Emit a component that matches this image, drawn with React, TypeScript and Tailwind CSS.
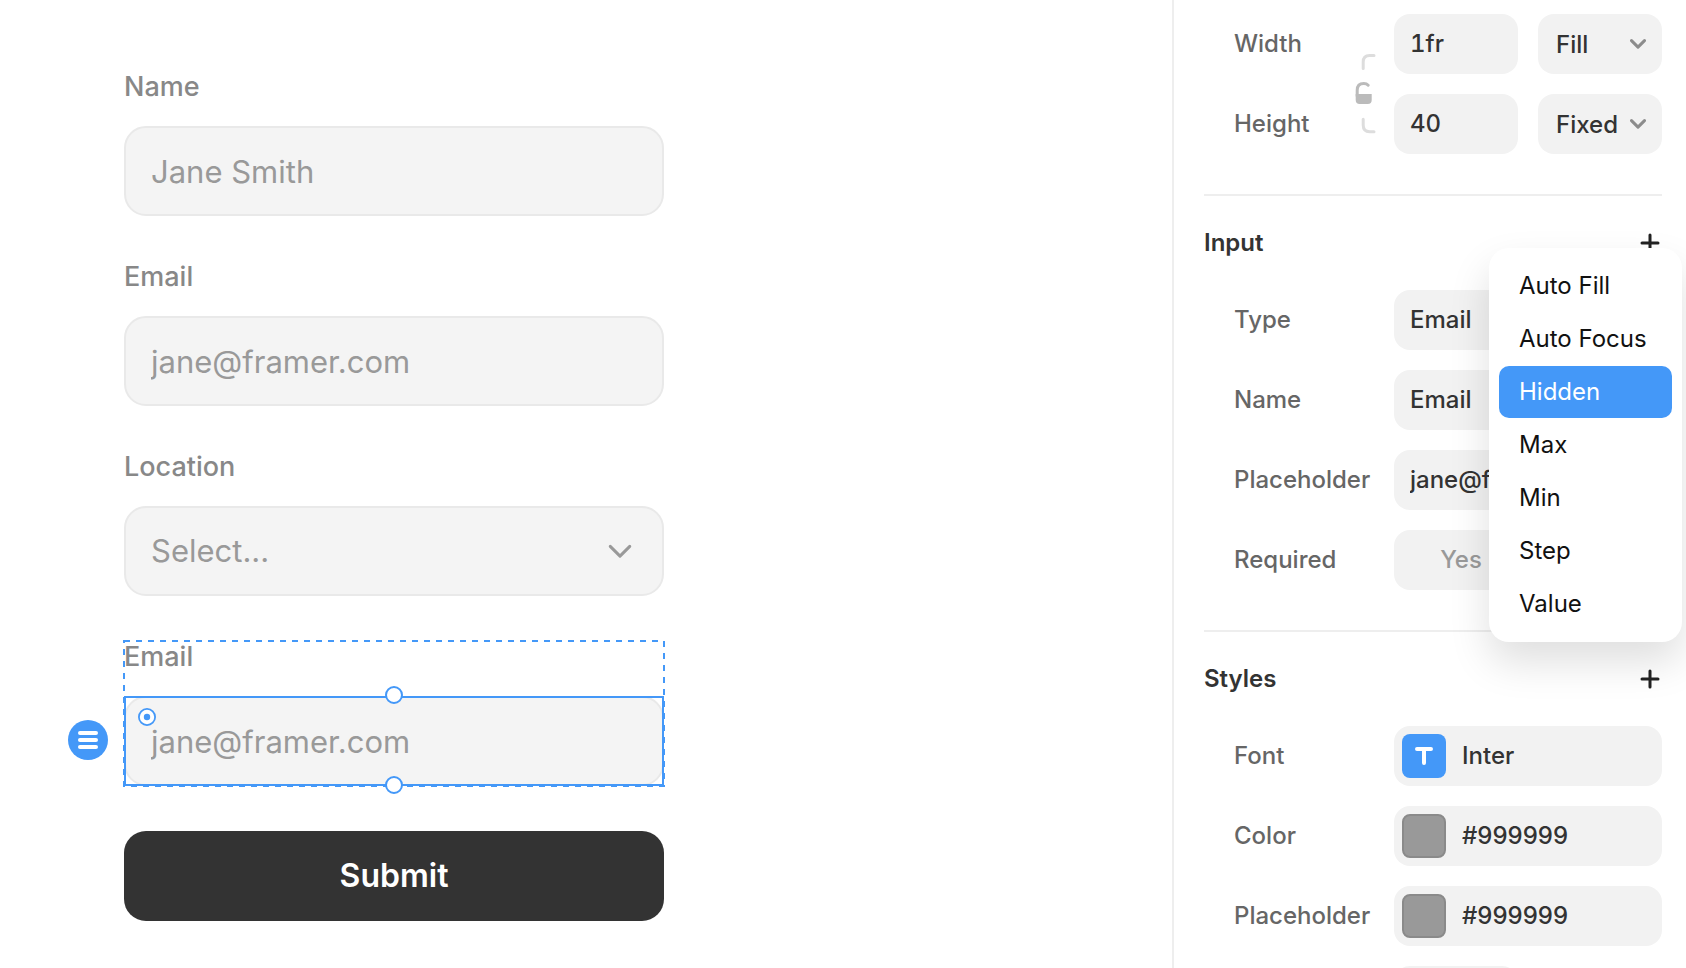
import { useId, type ReactNode } from 'react';

const menuItems = ['Auto Fill', 'Auto Focus', 'Hidden', 'Max', 'Min', 'Step', 'Value'];

function Chevron({ className }: { className: string }) {
  return (
    <svg viewBox="0 0 16 10" fill="none" stroke="currentColor" className={className} aria-hidden="true">
      <path d="M1.5 1.6 8 8.1l6.5-6.5" strokeLinecap="round" strokeLinejoin="round" />
    </svg>
  );
}

function Plus({ label }: { label: string }) {
  return (
    <button type="button" aria-label={label} className="size-6 text-[#222]">
      <svg viewBox="0 0 24 24" fill="none" stroke="currentColor" strokeWidth="3" strokeLinecap="round" className="size-6">
        <path d="M12 4v16M4 12h16" />
      </svg>
    </button>
  );
}

/* ---------- Canvas form ---------- */

const boxClass =
  'block h-[90px] w-full appearance-none rounded-[22px] border-2 border-[#e9e9e9] bg-[#f4f4f4] px-[25px] text-[31px] text-[#999] placeholder:text-[#999] outline-none';

function FormField({ label, children }: { label: string; children: (id: string) => ReactNode }) {
  const id = useId();
  return (
    <div className="relative flex flex-col gap-6">
      <label htmlFor={id} className="text-[27px] leading-[31px] font-medium text-[#888]">
        {label}
      </label>
      <div className="relative">{children(id)}</div>
    </div>
  );
}

function Handle({ className }: { className: string }) {
  return <span className={`size-[18px] shrink-0 rounded-full border-2 border-[#4498f8] bg-white ${className}`} />;
}

function Canvas() {
  return (
    <main className="min-w-0 flex-1 px-[124px] pt-[71px]">
      <form className="flex w-full max-w-[540px] flex-col gap-[45px]">
        <FormField label="Name">
          {(id) => <input id={id} type="text" placeholder="Jane Smith" className={boxClass} />}
        </FormField>
        <FormField label="Email">
          {(id) => <input id={id} type="email" placeholder="jane@framer.com" className={boxClass} />}
        </FormField>
        <FormField label="Location">
          {(id) => (
            <>
              <select id={id} className={boxClass}>
                <option>Select...</option>
              </select>
              <Chevron className="pointer-events-none absolute top-[38px] right-8 h-[15px] w-6 stroke-2 text-[#999]" />
            </>
          )}
        </FormField>
        <div className="relative">
          <svg className="pointer-events-none absolute inset-0 size-full overflow-visible" aria-hidden="true">
            <rect width="100%" height="100%" fill="none" stroke="#4498f8" strokeWidth="2" strokeDasharray="6 6" />
          </svg>
          <FormField label="Email">
            {(id) => (
              <>
                <input id={id} type="email" placeholder="jane@framer.com" className={boxClass} />
                <div className="pointer-events-none absolute inset-0 flex flex-col items-center justify-between border-2 border-[#4498f8]">
                  <Handle className="-mt-3" />
                  <Handle className="-mb-[10px]" />
                </div>
                <svg viewBox="0 0 18 18" className="absolute top-3 left-[14px] size-[18px]" aria-hidden="true">
                  <circle cx="9" cy="9" r="8.1" fill="#fff" stroke="#4498f8" strokeWidth="1.8" />
                  <circle cx="9" cy="9" r="3.2" fill="#4498f8" />
                </svg>
                <button
                  type="button"
                  aria-label="Drag stack item"
                  className="absolute top-6 -left-14 flex size-10 flex-col items-center justify-center gap-[3px] rounded-full bg-[#4498f8]"
                >
                  <span className="h-1 w-5 rounded-full bg-white" />
                  <span className="h-1 w-5 rounded-full bg-white" />
                  <span className="h-1 w-5 rounded-full bg-white" />
                </button>
              </>
            )}
          </FormField>
        </div>
        <button type="submit" className="h-[90px] w-full rounded-[22px] bg-[#333] text-[32px] font-semibold text-white">
          Submit
        </button>
      </form>
    </main>
  );
}

/* ---------- Properties panel ---------- */

const fieldClass =
  'block h-[60px] w-full min-w-0 appearance-none rounded-2xl bg-[#f2f2f2] text-[24px] text-[#333] font-medium tabular-nums outline-none';
const inputClass = `${fieldClass} px-4 pb-[2px]`;

function PanelSelect({ id, value, label }: { id?: string; value: string; label?: string }) {
  return (
    <div className="relative">
      <select id={id} aria-label={label} className={`${fieldClass} pt-[2px] pl-[18px]`}>
        <option>{value}</option>
      </select>
      <Chevron className="pointer-events-none absolute top-[25px] right-4 h-[10px] w-4 stroke-3 text-[#8c8c8c]" />
    </div>
  );
}

function Row({ label, children }: { label: string; children: (id: string) => ReactNode }) {
  const id = useId();
  return (
    <div className="flex h-[60px] items-center">
      <label htmlFor={id} className="flex-1 pl-[30px] text-[24px] font-medium text-[#666]">
        {label}
      </label>
      <div className="w-[268px]">{children(id)}</div>
    </div>
  );
}

function Swatch({ label, value }: { label: string; value: string }) {
  return (
    <Row label={label}>
      {(id) => (
        <div className="flex h-[60px] items-center gap-4 rounded-2xl bg-[#f2f2f2] px-2">
          <button
            type="button"
            aria-label={`Pick ${label.toLowerCase()}`}
            className="size-11 shrink-0 rounded-lg border-2 border-[#8a8a8a] bg-[#999]"
          />
          <input id={id} defaultValue={value} className="w-full min-w-0 bg-transparent text-[24px] font-medium text-[#333] outline-none" />
        </div>
      )}
    </Row>
  );
}

function SizeSection() {
  return (
    <section className="flex border-b-2 border-[#eee] pt-[14px] pb-10">
      <div className="flex w-[149px] flex-col gap-5 pl-[30px] text-[24px] font-medium text-[#666]">
        <label htmlFor="width" className="leading-[60px]">Width</label>
        <label htmlFor="height" className="leading-[60px]">Height</label>
      </div>
      <svg viewBox="0 0 24 84" fill="none" className="mt-[38px] mr-[17px] h-[84px] w-6" aria-hidden="true">
        <path d="M10.2 16.5V10q0-6.5 6.500-6.500H21" stroke="#ddd" strokeWidth="3" strokeLinecap="round" />
        <path d="M10.2 67.2V73q0 6.700 6.500 6.700H21" stroke="#ddd" strokeWidth="3" strokeLinecap="round" />
        <path d="M4.2 44V38.200q0-6.700 6.600-6.700 2.800 0 4.400 1.700" stroke="#bbb" strokeWidth="3" strokeLinecap="round" />
        <path d="M2.700 42H18.700V48q0 4-4 4h-8q-4 0-4-4z" fill="#bbb" />
      </svg>
      <div className="grid flex-1 grid-cols-2 gap-5">
        <input id="width" defaultValue="1fr" className={inputClass} />
        <PanelSelect value="Fill" label="Width sizing" />
        <input id="height" defaultValue="40" className={inputClass} />
        <PanelSelect value="Fixed" label="Height sizing" />
      </div>
    </section>
  );
}

function AttributeMenu() {
  return (
    <div
      role="menu"
      className="absolute top-[52px] -right-5 z-10 flex w-[193px] flex-col gap-px rounded-[20px] bg-white px-[10px] py-3 shadow-[0_20px_40px_rgba(0,0,0,0.13)]"
    >
      {menuItems.map((item) => (
        <button
          key={item}
          type="button"
          role="menuitem"
          className={`h-[52px] rounded-[10px] px-5 text-left text-[24px] whitespace-nowrap ${
            item === 'Hidden' ? 'bg-[#4498f8] text-white' : 'text-[#111]'
          }`}
        >
          {item}
        </button>
      ))}
    </div>
  );
}

function SectionHeader({ title }: { title: string }) {
  return (
    <header className="flex h-[94px] items-center justify-between">
      <h2 className="text-[24px] font-semibold text-[#333]">{title}</h2>
      <Plus label={`Add to ${title}`} />
    </header>
  );
}

function Panel() {
  return (
    <aside className="w-[514px] shrink-0 border-l-2 border-[#eee] pr-6 pl-[30px]">
      <SizeSection />
      <section className="relative border-b-2 border-[#eee] pb-10">
        <SectionHeader title="Input" />
        <AttributeMenu />
        <div className="flex flex-col gap-5">
          <Row label="Type">
            {(id) => (
              <select id={id} className={`${fieldClass} px-4`}>
                <option>Email</option>
              </select>
            )}
          </Row>
          <Row label="Name">{(id) => <input id={id} defaultValue="Email" className={inputClass} />}</Row>
          <Row label="Placeholder">
            {(id) => <input id={id} defaultValue="jane@framer.com" className={inputClass} />}
          </Row>
          <Row label="Required">
            {(id) => (
              <div className="grid h-[60px] grid-cols-2 rounded-2xl bg-[#f2f2f2] text-[24px] font-medium text-[#999]">
                <button id={id} type="button">Yes</button>
                <button type="button" aria-label="Not required" />
              </div>
            )}
          </Row>
        </div>
      </section>
      <section>
        <SectionHeader title="Styles" />
        <div className="flex flex-col gap-5">
          <Row label="Font">
            {(id) => (
              <button id={id} type="button" className="flex h-[60px] w-full items-center gap-4 rounded-2xl bg-[#f2f2f2] px-2 text-[24px] font-medium text-[#333]">
                <span className="flex size-11 items-center justify-center rounded-lg bg-[#4498f8]">
                  <svg viewBox="0 0 20 20" fill="none" stroke="#fff" strokeWidth="4" strokeLinecap="round" className="size-5" aria-hidden="true">
                    <path d="M3 3h14M10 3v14" />
                  </svg>
                </span>
                Inter
              </button>
            )}
          </Row>
          <Swatch label="Color" value="#999999" />
          <Swatch label="Placeholder" value="#999999" />
          <Row label="">{(id) => <input id={id} aria-label="Padding" className={`${inputClass} max-w-[124px]`} />}</Row>
        </div>
      </section>
    </aside>
  );
}

export default function App() {
  return (
    <div className="flex h-screen overflow-hidden bg-white font-['Inter',sans-serif]">
      <Canvas />
      <Panel />
    </div>
  );
}
